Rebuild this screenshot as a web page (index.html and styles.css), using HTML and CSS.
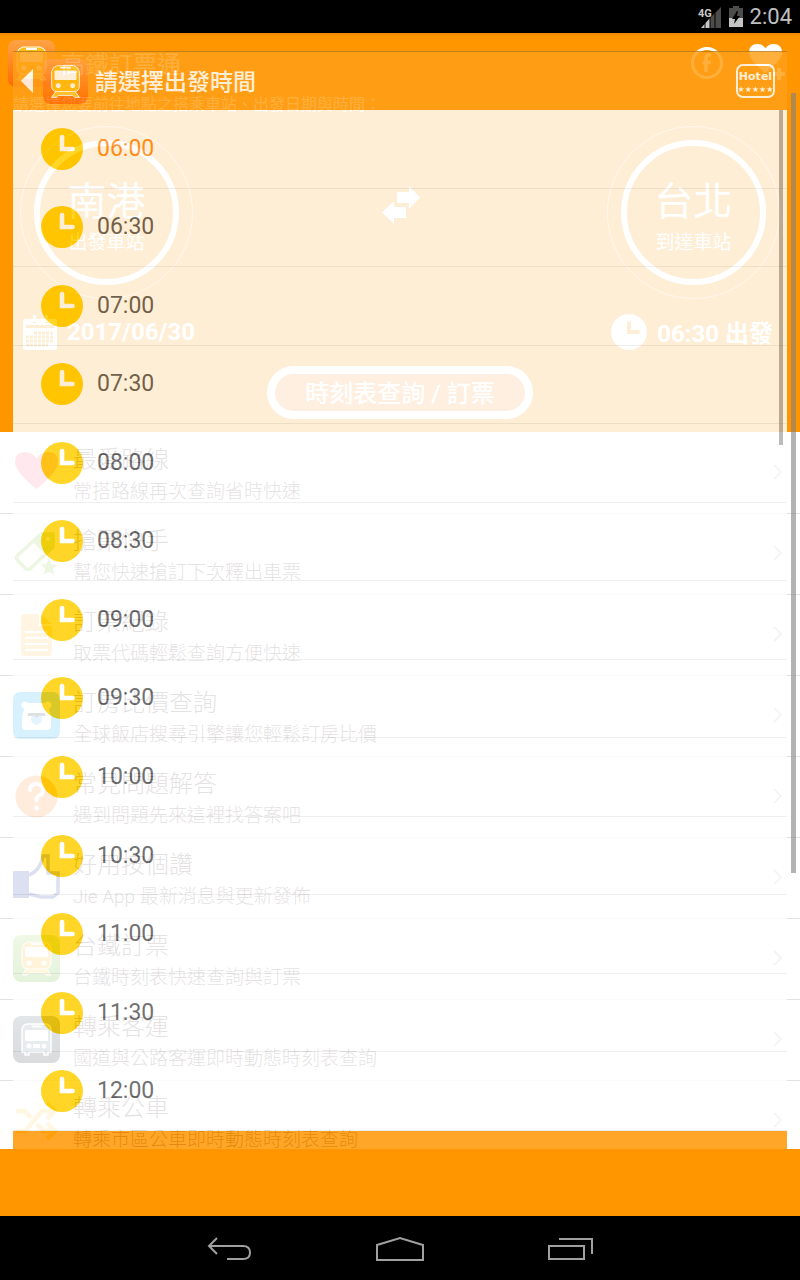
FILE: index.html
```html
<!DOCTYPE html>
<html lang="zh-Hant">
<head>
<meta charset="utf-8">
<meta name="viewport" content="width=device-width, initial-scale=1">
<title>高鐵訂票通</title>
<link rel="stylesheet" href="styles.css">
</head>
<body>
<svg class="defs" aria-hidden="true">
  <defs>
    <linearGradient id="tile" x1="0" y1="0" x2="0" y2="1"><stop offset="0" stop-color="#ffa344"/><stop offset="1" stop-color="#ff6a00"/></linearGradient>
    <linearGradient id="green" x1="0" y1="0" x2="0" y2="1"><stop offset="0" stop-color="#9ad85a"/><stop offset="1" stop-color="#5cb52a"/></linearGradient>
    <linearGradient id="navy" x1="0" y1="0" x2="0" y2="1"><stop offset="0" stop-color="#4d6278"/><stop offset="1" stop-color="#16202c"/></linearGradient>
    <symbol id="train" viewBox="0 0 47 47">
      <path d="M14 33 9 40h5l2-2h15l2 2h5l-5-7z" fill="#ffc830" stroke="#fff" stroke-width="1"/>
      <path d="M15 7h17q5 1 6 6v15q0 6-6 6H15q-6 0-6-6V13q1-5 6-6z" fill="#ffbe14" stroke="#fff" stroke-width="1"/>
      <path d="M18 9h11" stroke="#fff" stroke-width="2"/>
      <rect x="12" y="12" width="23" height="10" rx="1" fill="#fff"/>
      <circle cx="16" cy="28" r="2.600" fill="#fff"/><circle cx="31" cy="28" r="2.600" fill="#fff"/>
    </symbol>
    <symbol id="clock" viewBox="0 0 42 42">
      <circle cx="21" cy="21" r="21" fill="#ffcf00"/>
      <path d="M21 9v12h10.500" fill="none" stroke="#fff" stroke-width="4.600" stroke-linecap="round"/>
    </symbol>
    <symbol id="chevron" viewBox="0 0 10 16"><path d="M1 1l7 7-7 7" fill="none" stroke="#d0bcc6" stroke-width="2"/></symbol>
  </defs>
</svg>
<div class="device">
  <div class="status">
    <svg width="24" height="24" viewBox="0 0 24 24" aria-hidden="true">
      <path d="M23 2v21H12V13z" fill="#4c4c4a"/><path d="M3 23 12 13v10z" fill="#c8c8c8"/>
      <path d="M7 18v5M12 12v11M17 7v16" stroke="#000" stroke-width="1"/>
      <text x="0" y="12" class="status-net">4G</text>
    </svg>
    <svg width="14" height="21" viewBox="0 0 14 21" aria-hidden="true">
      <path d="M0 2h4V0h6v2h4v19H0z" fill="#4c4c4a"/><path d="M0 12h14v9H0z" fill="#c4c4c4"/><path d="M8 5 3 13h3l-1 5 6-8H8l1-5z" fill="#000"/>
    </svg>
    <time>2:04</time>
  </div>

  <div class="stage">
    <main class="page">
      <section class="hero">
        <header class="page-bar">
          <svg class="tile" viewBox="0 0 47 47" aria-hidden="true"><rect width="47" height="47" rx="8" fill="url(#tile)"/><use href="#train"/></svg>
          <h1>高鐵訂票通</h1>
          <a href="#facebook" class="bar-link" aria-label="Facebook"><svg width="34" height="34" viewBox="0 0 34 34"><circle cx="17" cy="17" r="14.500" fill="none" stroke="#fff" stroke-width="3"/><path d="M21 9h-2q-3 0-3 3v14M12.500 16.500H21" fill="none" stroke="#fff" stroke-width="3.500"/></svg></a>
          <a href="#favorite" class="bar-link" aria-label="加入最愛"><svg width="36" height="38" viewBox="0 0 36 38"><path d="M16.500 29Q0 16 0 8.500 0 0 8.500 0 14 0 16.500 4.500 19 0 24.500 0 33 0 33 8.500 33 16 16.500 29z" fill="#fff"/><path d="M30 24v12M24 30h12" stroke="#fff" stroke-width="4"/></svg></a>
        </header>
        <p class="hint">請選擇您要前往地點之搭乘車站、出發日期與時間：</p>
        <div class="stations">
          <button type="button" class="station"><span class="ring"><b>南港</b><small>出發車站</small></span></button>
          <button type="button" class="swap" aria-label="交換車站"><svg width="38" height="38" viewBox="0 0 38 38"><path d="M15 6h12V0l11 11.500L27 23v-6H15zM24 21H12v-6L0 26.500 12 38v-6h12z" fill="#fff"/></svg></button>
          <button type="button" class="station"><span class="ring"><b>台北</b><small>到達車站</small></span></button>
        </div>
        <div class="when">
          <button type="button"><svg width="34" height="36" viewBox="0 0 34 36"><path fill-rule="evenodd" d="M2 5h8v4h3V5h9v4h3V5h7q2 0 2 2v27q0 2-2 2H2q-2 0-2-2V7q0-2 2-2zm1 6v3h28v-3z" fill="#fff"/><path d="M11.500 1v7M23.500 1v7" stroke="#fff" stroke-width="3"/><path d="M11 19h20M3 23h28M3 27h28M3 31h22" stroke="#ff9800" stroke-width="3" stroke-dasharray="3 1"/></svg>2017/06/30</button>
          <button type="button"><svg width="36" height="36" viewBox="0 0 36 36"><circle cx="18" cy="18" r="18" fill="#fff"/><path d="M18 9v9h9" fill="none" stroke="#ff9800" stroke-width="4" stroke-linecap="round"/></svg>06:30 出發</button>
        </div>
        <button type="button" class="search">時刻表查詢 / 訂票</button>
      </section>

      <nav class="menu" aria-label="功能">
        <a href="#f1"><svg class="tile" viewBox="0 0 47 47"><path d="M23.500 41Q2 24 2 14 2 4 12 4q8 0 11.500 7Q27 4 35 4q10 0 10 10 0 10-21.500 27z" fill="#ff7896"/></svg><span><b>最愛路線</b><small>常搭路線再次查詢省時快速</small></span><svg class="chev"><use href="#chevron"/></svg></a>
        <a href="#f2"><svg class="tile" viewBox="0 0 47 47"><path d="M28 4h12v13L18 38q-3 3-6 0l-7-7q-3-3 0-6z" fill="none" stroke="#90cd50" stroke-width="3.500"/><path d="M27 3h14v14l-8 8-14-14z" fill="#90cd50"/><circle cx="35" cy="9" r="2" fill="#fff"/><path d="M36 31l1.800 3.900 4.200.5-3.100 2.900.8 4.300-3.700-2-3.700 2 .8-4.300-3.100-2.900 4.200-.5z" fill="#90cd50" stroke="#90cd50" stroke-width="2"/></svg><span><b>搶票快手</b><small>幫您快速搶訂下次釋出車票</small></span><svg class="chev"><use href="#chevron"/></svg></a>
        <a href="#f3"><svg class="tile" viewBox="0 0 47 47"><path d="M11 3h15v12h13v27q0 3-3 3H11q-3 0-3-3V6q0-3 3-3zM28 3l11 10H28z" fill="#ffc54d"/><path d="M12 21h23M12 27h23M12 33h23M12 39h23" stroke="#fff" stroke-width="2"/></svg><span><b>訂票紀錄</b><small>取票代碼輕鬆查詢方便快速</small></span><svg class="chev"><use href="#chevron"/></svg></a>
        <a href="#f4"><svg class="tile" viewBox="0 0 47 47"><rect width="47" height="47" rx="7" fill="#10a8ff"/><circle cx="12" cy="13" r="3.500" fill="#fff"/><circle cx="35" cy="13" r="3.500" fill="#fff"/><path d="M13 11h21l4 13v10q0 4-4 4H13q-4 0-4-4V24z" fill="#fff"/><path d="M15 21h17v3H15z" fill="#345"/><path d="M18 27q0-4 5.500-4t5.500 4-5.500 6Q18 31 18 27z" fill="#58bfff"/><path d="M20 22h7l-3.500 4z" fill="#345"/></svg><span><b>訂房比價查詢</b><small>全球飯店搜尋引擎讓您輕鬆訂房比價</small></span><svg class="chev"><use href="#chevron"/></svg></a>
        <a href="#f5"><svg class="tile" viewBox="0 0 47 47"><circle cx="23.500" cy="23.500" r="21" fill="#ff8a30"/><path d="M17 17q0-6 6.500-6t6.500 6q0 4-4 5.500-2.500 1-2.500 5" fill="none" stroke="#fff" stroke-width="4" stroke-linecap="round"/><circle cx="23.500" cy="35" r="2.500" fill="#fff"/></svg><span><b>常見問題解答</b><small>遇到問題先來這裡找答案吧</small></span><svg class="chev"><use href="#chevron"/></svg></a>
        <a href="#f6"><svg class="tile" viewBox="0 0 47 47"><path d="M0 17h16v27H0z" fill="#3040a8"/><path d="M16 21q11-4 14-19h5v17h10v20l-5 4H28l-12-3" fill="none" stroke="#3040a8" stroke-width="3.500"/></svg><span><b>好用按個讚</b><small>Jie App 最新消息與更新發佈</small></span><svg class="chev"><use href="#chevron"/></svg></a>
        <a href="#f7"><svg class="tile" viewBox="0 0 47 47"><rect width="47" height="47" rx="8" fill="url(#green)"/><use href="#train"/></svg><span><b>台鐵訂票</b><small>台鐵時刻表快速查詢與訂票</small></span><svg class="chev"><use href="#chevron"/></svg></a>
        <a href="#f8"><svg class="tile" viewBox="0 0 47 47"><rect width="47" height="47" rx="8" fill="url(#navy)"/><path d="M14 8h19q5 1 5 6v22h-3v3h-4v-3H16v3h-4v-3H9V14q0-5 5-6z" fill="#6f8ba0" stroke="#fff" stroke-width="1.500"/><rect x="12" y="14" width="23" height="11" rx="1" fill="#fff"/><path d="M19 10.500h10" stroke="#fff" stroke-width="2"/><circle cx="16" cy="30" r="2.500" fill="#fff"/><circle cx="31" cy="30" r="2.500" fill="#fff"/><path d="M20 28h7v4h-7z" fill="#fff"/></svg><span><b>轉乘客運</b><small>國道與公路客運即時動態時刻表查詢</small></span><svg class="chev"><use href="#chevron"/></svg></a>
        <a href="#f9"><svg class="tile" viewBox="0 0 47 47"><path d="M3 14h9l6 7M3 34h9l17-20h9M24 27l6 7h8M34 6l8 8-8 8M34 26l8 8-8 8" fill="none" stroke="#ffcf50" stroke-width="4.500"/></svg><span><b>轉乘公車</b><small>轉乘市區公車即時動態時刻表查詢</small></span><svg class="chev"><use href="#chevron"/></svg></a>
      </nav>
      <div class="banner"></div>
    </main>

    <section class="sheet" role="dialog" aria-labelledby="sheet-title">
      <header class="sheet-bar">
        <button type="button" class="back" aria-label="返回"><svg width="12" height="24" viewBox="0 0 12 24"><path d="M12 0v24L0 12z" fill="#fff"/></svg></button>
        <svg class="tile-small" viewBox="0 0 47 47" aria-hidden="true"><rect width="47" height="47" rx="8" fill="url(#tile)"/><use href="#train"/></svg>
        <h2 id="sheet-title">請選擇出發時間</h2>
        <a href="#hotel" class="hotel" aria-label="Hotel"><svg width="40" height="34" viewBox="0 0 40 34"><rect x="1" y="1" width="37" height="32" rx="6" fill="none" stroke="#fff" stroke-width="2"/><text x="19.500" y="16" class="hotel-name">Hotel</text><text x="19.500" y="28" class="hotel-stars">★★★★★</text></svg></a>
      </header>
      <div class="times">
        <button type="button" class="selected"><svg><use href="#clock"/></svg>06:00</button>
        <button type="button"><svg><use href="#clock"/></svg>06:30</button>
        <button type="button"><svg><use href="#clock"/></svg>07:00</button>
        <button type="button"><svg><use href="#clock"/></svg>07:30</button>
        <button type="button"><svg><use href="#clock"/></svg>08:00</button>
        <button type="button"><svg><use href="#clock"/></svg>08:30</button>
        <button type="button"><svg><use href="#clock"/></svg>09:00</button>
        <button type="button"><svg><use href="#clock"/></svg>09:30</button>
        <button type="button"><svg><use href="#clock"/></svg>10:00</button>
        <button type="button"><svg><use href="#clock"/></svg>10:30</button>
        <button type="button"><svg><use href="#clock"/></svg>11:00</button>
        <button type="button"><svg><use href="#clock"/></svg>11:30</button>
        <button type="button"><svg><use href="#clock"/></svg>12:00</button>
        <span class="thumb"></span>
      </div>
      <div class="sheet-foot"></div>
    </section>
    <span class="page-thumb"></span>
  </div>

  <nav class="keys" aria-label="系統">
    <button type="button" aria-label="返回"><svg width="44" height="24" viewBox="0 0 44 24"><path d="M10 1 2 9l8 8M2 9h34q7 0 7 6.500T36 22H20" fill="none" stroke="#a0a0a0" stroke-width="2"/></svg></button>
    <button type="button" aria-label="主畫面"><svg width="48" height="26" viewBox="0 0 48 26"><path d="M1 9 24 2l23 7v15H1z" fill="none" stroke="#a0a0a0" stroke-width="2"/></svg></button>
    <button type="button" aria-label="最近使用"><svg width="46" height="24" viewBox="0 0 46 24"><path d="M1 9h35v13H1zM11 2h33v15" fill="none" stroke="#a0a0a0" stroke-width="2"/></svg></button>
  </nav>
</div>
</body>
</html>
```
FILE: styles.css
```css
* { box-sizing: border-box; }
body { margin: 0; background: #000; font-family: Roboto, "Noto Sans CJK TC", sans-serif; }
h1, h2, p { margin: 0; font-weight: 400; }
button { margin: 0; padding: 0; border: 0; background: none; color: inherit; font: inherit; cursor: pointer; }
a { color: inherit; text-decoration: none; }
svg { display: block; flex: none; }
.defs { position: absolute; width: 0; height: 0; }

.device { display: flex; flex-direction: column; height: 100vh; overflow: hidden; }
.status { display: flex; flex: none; align-items: center; justify-content: flex-end; gap: 7px; height: 33px; padding-right: 8px; color: #c0c0c0; font-size: 22px; line-height: 36px; }
.status-net { fill: #c8c8c8; font: 700 11px Roboto, sans-serif; }
.stage { position: relative; flex: 1; min-height: 0; }

.page { display: flex; flex-direction: column; height: 100%; background: #fff; }
.hero { display: flex; flex: none; flex-direction: column; padding-bottom: 13px; background: linear-gradient(#ee8800, #ff9600 4px); color: #fff; }
.page-bar { display: flex; align-items: center; gap: 6px; height: 60px; padding: 0 15px 0 8px; }
.page-bar h1 { flex: 1; padding-top: 4px; font-size: 24px; line-height: 36px; }
.bar-link + .bar-link { margin-left: 19px; }
.tile { width: 47px; height: 47px; }
.hint { padding-left: 13px; font-size: 16px; line-height: 24px; }
.stations { display: flex; align-items: center; justify-content: space-between; padding: 9px 20px 0; }
.station { width: 173px; height: 173px; padding: 13px; border: 1px solid #ffffff90; border-radius: 50%; }
.ring { display: flex; flex-direction: column; justify-content: center; height: 100%; padding-top: 10px; border: 6px solid #fff; border-radius: 50%; }
.ring b { font-size: 39px; font-weight: 400; line-height: 50px; }
.ring small { font-size: 19px; line-height: 32px; }
.swap { margin-bottom: 16px; padding-left: 2px; }
.when { display: flex; justify-content: space-between; height: 67px; padding: 0 27px 2px 23px; }
.when button { display: flex; align-items: center; gap: 10px; font-size: 24px; font-weight: 700; }
.search { align-self: center; padding: 3px 30px 0; border: 8px solid #fff; border-radius: 27px; background: #ffa040; font-size: 24px; font-weight: 500; line-height: 34px; }

.menu { flex: 1; min-height: 0; overflow: hidden; color: #5c4a56; }
.menu a { display: flex; align-items: center; gap: 13px; height: 81px; padding: 0 17px 2px 13px; }
.menu a + a { border-top: 1px solid #e2e2e2; }
.menu span { display: flex; flex: 1; flex-direction: column; padding-top: 8px; }
.menu b { font-size: 24px; font-weight: 300; line-height: 32px; }
.menu small { font-size: 19px; font-weight: 300; line-height: 32px; }
.chev { width: 10px; height: 16px; }
.banner { flex: none; height: 67px; background: #ff9600; }

.sheet { position: absolute; inset: 18px 13px 0; display: flex; flex-direction: column; border-top: 1px solid #bd7a1c; background: #fff; opacity: .84; }
.sheet-bar { display: flex; flex: none; align-items: center; height: 58px; padding: 0 11px 0 8px; background: #ffa018; color: #fff; }
.tile-small { width: 45px; height: 45px; margin-left: 10px; }
.sheet-bar h2 { flex: 1; margin-left: 7px; padding-top: 4px; font-size: 23px; font-weight: 500; line-height: 34px; }
.hotel-name { fill: #fff; font: 700 11px "DejaVu Sans", sans-serif; text-anchor: middle; }
.hotel-stars { fill: #fff; font: 8px "DejaVu Sans", sans-serif; text-anchor: middle; }
.times { position: relative; display: flex; flex: 1; flex-direction: column; min-height: 0; color: #585858; }
.times button { display: flex; flex: 1; align-items: center; gap: 14px; padding-left: 28px; border-bottom: 1px solid #ececec; font-size: 23px; line-height: 30px; }
.times svg { width: 42px; height: 42px; }
.times .selected { color: #ff8a18; }
.thumb { position: absolute; top: 0; right: 4px; width: 4px; height: 335px; background: #00000050; }
.sheet-foot { flex: none; height: 85px; background: #ff9600; }
.page-thumb { position: absolute; top: 60px; right: 4px; width: 5px; height: 780px; background: #80808098; }

.keys { display: flex; flex: none; align-items: center; justify-content: center; height: 64px; }
.keys button { display: flex; align-items: center; justify-content: center; width: 171px; height: 64px; padding-top: 2px; }
```
